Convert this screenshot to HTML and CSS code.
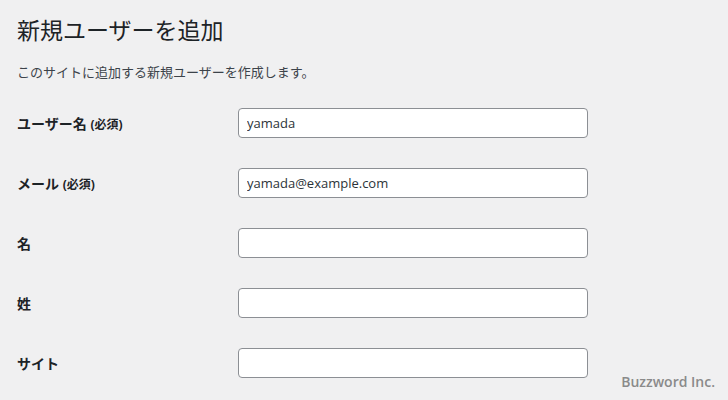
FILE: index.html
```html
<!DOCTYPE html>
<html lang="ja">
<head>
    <meta charset="UTF-8">
    <meta name="viewport" content="width=device-width, initial-scale=1.0">
    <title>新規ユーザーを追加</title>
    <link rel="stylesheet" href="styles.css">
</head>
<body>
    <div class="wrap">
        <h1>新規ユーザーを追加</h1>
        <p class="intro">このサイトに追加する新規ユーザーを作成します。</p>

        <form id="createuser" class="form-table">
            <div class="row">
                <label for="user_login">ユーザー名 <span class="req">(必須)</span></label>
                <input type="text" id="user_login" name="user_login" value="yamada">
            </div>
            <div class="row">
                <label for="email">メール <span class="req">(必須)</span></label>
                <input type="text" id="email" name="email" value="yamada@example.com">
            </div>
            <div class="row">
                <label for="first_name">名</label>
                <input type="text" id="first_name" name="first_name">
            </div>
            <div class="row">
                <label for="last_name">姓</label>
                <input type="text" id="last_name" name="last_name">
            </div>
            <div class="row">
                <label for="url">サイト</label>
                <input type="text" id="url" name="url">
            </div>
        </form>
    </div>

    <div class="credit">Buzzword Inc.</div>
</body>
</html>
```

FILE: styles.css
```css
body {
    margin: 0;
    height: 400px;
    overflow: hidden;
    background-color: #f0f0f1;
    color: #1d2327;
    font-family: "Noto Sans", "Noto Sans CJK JP", sans-serif;
    font-size: 13px;
}

.wrap {
    padding-left: 17px;
}

h1 {
    margin: 15px 0 0;
    font-size: 23px;
    font-weight: 400;
    line-height: 30px;
    color: #1d2327;
}

.intro {
    margin: 17px 0 0;
    font-size: 13px;
    line-height: 20px;
    color: #3c434a;
}

.form-table {
    margin-top: 11px;
}

.row {
    display: grid;
    grid-template-columns: 221px 350px;
    align-items: center;
    height: 60px;
}

.row label {
    font-size: 14px;
    font-weight: 700;
    color: #1d2327;
}

.row .req {
    font-size: 12px;
}

.row input {
    box-sizing: border-box;
    width: 350px;
    height: 30px;
    padding: 0 8px;
    border: 1px solid #8c8f94;
    border-radius: 4px;
    background-color: #fff;
    color: #2c3338;
    font-family: "Open Sans", "Noto Sans", sans-serif;
    font-size: 13px;
}

.credit {
    position: absolute;
    right: 13px;
    bottom: 9px;
    font-family: "Open Sans", sans-serif;
    font-size: 14px;
    font-weight: 600;
    color: #8a8a8a;
}
```
